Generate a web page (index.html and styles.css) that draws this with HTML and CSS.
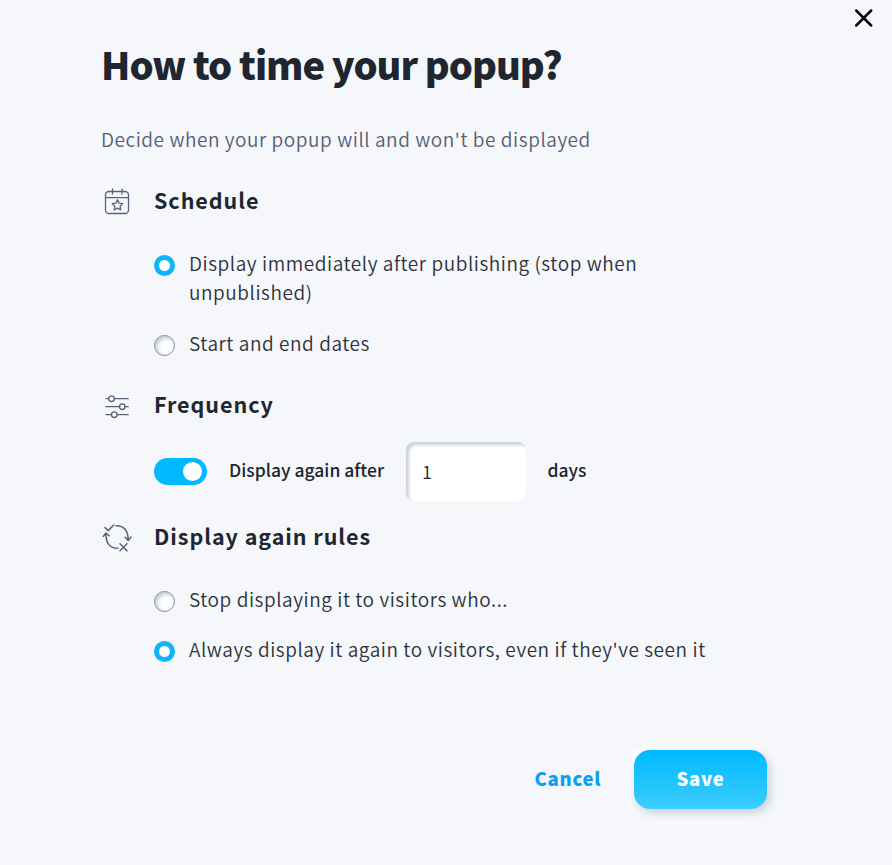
FILE: index.html
```html
<!DOCTYPE html>
<html lang="en">
<head>
<meta charset="utf-8">
<title>How to time your popup?</title>
<link rel="stylesheet" href="styles.css">
</head>
<body>
<main class="dialog">
  <button class="close" aria-label="Close"><svg width="20" height="20" viewBox="0 0 20 20"><path d="M2.2 2.5l15 15M17.2 2.5l-15 15" fill="none" stroke="#05070c" stroke-width="2.5" stroke-linecap="round"/></svg></button>
  <h1 class="title">How to time your popup?</h1>
  <p class="subtitle">Decide when your popup will and won't be displayed</p>

  <section class="section schedule">
    <svg class="icon" width="30" height="30" viewBox="0 0 30 30" fill="none" stroke="#5a6478" stroke-width="1.3" stroke-linecap="round" stroke-linejoin="round"><rect x="3.5" y="4.5" width="23" height="22" rx="3.5"/><path d="M3.5 10.7h23M10.5 2v5M20 2v5M15.5 12.8l1.6 3.3 3.7.5-2.7 2.6.7 3.7-3.3-1.8-3.3 1.8.7-3.7-2.7-2.6 3.7-.5z"/></svg>
    <h2>Schedule</h2>
    <div class="options">
      <label class="option"><span class="radio on"></span><span class="text">Display immediately after publishing (stop when<br>unpublished)</span></label>
      <label class="option"><span class="radio"></span><span class="text">Start and end dates</span></label>
    </div>
  </section>

  <section class="section frequency">
    <svg class="icon" width="30" height="30" viewBox="0 0 30 30" fill="none" stroke="#5a6478" stroke-width="1.3" stroke-linecap="round"><path d="M4 6.7h2.7M12.3 6.7h13.9M4 14.7h13.5M23.1 14.7h3.1M4 22.7h5.5M15.1 22.7h11.1"/><circle cx="9.5" cy="6.7" r="2.8"/><circle cx="20.3" cy="14.7" r="2.8"/><circle cx="12.3" cy="22.7" r="2.8"/></svg>
    <h2>Frequency</h2>
    <div class="repeat">
      <span class="toggle"></span>
      <span class="repeat-label">Display again after</span>
      <input class="days-input" type="text" value="1" aria-label="Days">
      <span class="unit">days</span>
    </div>
  </section>

  <section class="section rules">
    <svg class="icon" width="30" height="30" viewBox="0 0 30 30" fill="none" stroke="#5a6478" stroke-width="1.5" stroke-linecap="round" stroke-linejoin="round"><path d="M3 5.6l3.2 3 5.5-5.6M14 3.8c7.6-.4 12 4.5 12.2 13.8M23.2 15.3l3 3.2 2.8-3.5M15.8 26.3c-7.8.2-12-5.1-11.8-14.5M1.4 14.3l2.5-3.3 3.3 2.8M18 21.8l7 7M25 21.8l-7 7"/></svg>
    <h2>Display again rules</h2>
    <div class="options">
      <label class="option"><span class="radio"></span><span class="text">Stop displaying it to visitors who...</span></label>
      <label class="option"><span class="radio on"></span><span class="text">Always display it again to visitors, even if they've seen it</span></label>
    </div>
  </section>

  <footer class="actions">
    <button class="cancel">Cancel</button>
    <button class="save">Save</button>
  </footer>
</main>
</body>
</html>
```

FILE: styles.css
```css
* { box-sizing: border-box; }
body {
  margin: 0;
  background: #f5f7fb;
  color: #20262f;
  font-family: "Noto Sans CJK SC", sans-serif;
  white-space: nowrap;
}
h1, h2, p { margin: 0; }
button { border: 0; padding: 0; background: none; font-family: inherit; }
.dialog { position: relative; width: 892px; height: 865px; padding: 34px 125px 0 101px; }
.close { position: absolute; top: 8px; right: 18px; width: 20px; height: 20px; }
.close svg, .icon { display: block; }
.title { font-size: 38px; line-height: 60px; font-weight: 900; letter-spacing: -1px; }
.subtitle { margin-top: 30px; font-size: 19px; line-height: 30px; font-weight: 350; color: #566075; letter-spacing: 0.56px; }
.section {
  display: grid;
  grid-template-columns: 53px 1fr;
}
.section h2 { font-size: 21.5px; line-height: 34px; font-weight: 700; letter-spacing: 0.95px; }
.schedule { margin-top: 29px; }
.schedule .icon { margin: 4px 0 0 1px; }
.frequency { margin-top: 30px; }
.frequency .icon { margin: 5px 0 0 1px; }
.rules { margin-top: 18px; }
.rules .icon { margin: 3px 0 0 1px; }
.options { grid-column: 2; display: flex; flex-direction: column; gap: 21px; margin-top: 31px; }
.schedule .options { gap: 22px; }
.option { display: flex; align-items: flex-start; gap: 14px; }
.text { font-size: 19px; line-height: 29px; font-weight: 350; letter-spacing: 0.565px; color: #2c323c; }
.radio {
  flex: none;
  width: 21px;
  height: 21px;
  margin-top: 7px;
  border: 1px solid #7f8d99;
  border-radius: 50%;
  background: #fff;
  box-shadow: inset 2px 2px 4px #bcc6ce;
}
.radio.on { border: 5px solid #0db6fa; box-shadow: none; }
.repeat { grid-column: 2; display: flex; align-items: center; height: 59px; margin-top: 20px; }
.toggle {
  width: 53px;
  height: 27px;
  padding: 4px 5px;
  border-radius: 14px;
  background: #00b9ff;
  display: flex;
  justify-content: flex-end;
}
.toggle::after { content: ""; width: 19px; height: 19px; border-radius: 50%; background: #fff; }
.repeat-label, .unit { font-size: 17.5px; line-height: 28px; font-weight: 500; padding-bottom: 4px; }
.repeat-label { width: 155px; margin-left: 22px; }
.days-input {
  width: 120px;
  height: 59px;
  margin: 0 21.5px 0 22px;
  padding: 0 16px 2px;
  border: 0;
  border-radius: 8px;
  background: #fff;
  box-shadow: inset 3px 3px 3px #ccd3dc;
  font: 350 18px "Noto Sans CJK SC", sans-serif;
  color: #20262f;
}
.actions { display: flex; justify-content: flex-end; align-items: center; gap: 33px; margin-top: 87px; }
.cancel, .save { font-size: 18.5px; line-height: 57px; padding-bottom: 2px; font-weight: 900; letter-spacing: 0.7px; }
.cancel { color: #0a9ff0; }
.save {
  width: 133px;
  height: 59px;
  border-radius: 16px;
  color: #fff;
  background: linear-gradient(#00b9ff, #3bcdfd);
  box-shadow: 3px 4px 8px #c9d0da, -3px -3px 7px #fff;
}
```
